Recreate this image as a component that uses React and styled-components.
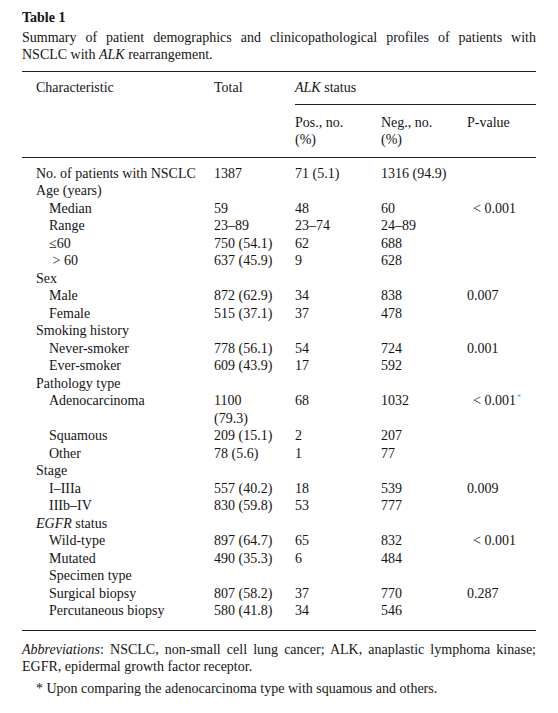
import React from "react";
import styled, { createGlobalStyle } from "styled-components";

const Global = createGlobalStyle`
  html, body { margin: 0; padding: 0; background: #ffffff; }
`;

const Page = styled.div`
  width: 514px;
  padding: 9px 22px 0 22px;
  font-family: "Liberation Serif", "Times New Roman", serif;
  font-size: 14px;
  line-height: 17.5px;
  color: #141414;
`;

const Title = styled.div`
  font-weight: bold;
`;

const Caption = styled.div`
  margin-top: 2px;
  line-height: 17px;
`;

const JustLine = styled.span`
  display: block;
  text-align: justify;
  text-align-last: ${(p) => (p.$full ? "justify" : "left")};
`;

const Table = styled.table`
  margin-top: 8.5px;
  width: 514px;
  border-collapse: collapse;
  table-layout: fixed;
  border-top: 1px solid #222;
  border-bottom: 1px solid #222;
`;

const Head = styled.th`
  font-weight: normal;
  text-align: left;
  vertical-align: top;
  padding: ${(p) => (p.$second ? "8.5px 0 8px 0" : "6.5px 0 8px 0")};
  padding-left: ${(p) => p.$indent || 0}px;
  border-bottom: ${(p) => (p.$rule ? "1px solid #222" : "none")};
`;

const Row = styled.tr`
  &:first-child td { padding-top: 7px; }
  &:last-child td { padding-bottom: 10px; }
`;

const Cell = styled.td`
  padding: 0;
  padding-left: ${(p) => p.$indent || 0}px;
  vertical-align: top;
  white-space: nowrap;
`;

const Ital = styled.i`
  font-style: italic;
`;

const Star = styled.sup`
  color: #3f9fc9;
  font-size: 8px;
  line-height: 0;
  vertical-align: 5px;
  margin-left: 1px;
`;

const Footer = styled.div`
  margin-top: 10.5px;
  line-height: 17px;
`;

const Footnote = styled.div`
  margin-top: 5px;
  padding-left: 14px;
  line-height: 17px;
`;

const rows = [
  { label: "No. of patients with NSCLC", level: 0, total: "1387", pos: "71 (5.1)", neg: "1316 (94.9)" },
  { label: "Age (years)", level: 0 },
  { label: "Median", level: 1, total: "59", pos: "48", neg: "60", p: "< 0.001", pShift: 6 },
  { label: "Range", level: 1, total: "23–89", pos: "23–74", neg: "24–89" },
  { label: "≤60", level: 1, total: "750 (54.1)", pos: "62", neg: "688" },
  { label: "\u00a0> 60", level: 1, total: "637 (45.9)", pos: "9", neg: "628" },
  { label: "Sex", level: 0 },
  { label: "Male", level: 1, total: "872 (62.9)", pos: "34", neg: "838", p: "0.007" },
  { label: "Female", level: 1, total: "515 (37.1)", pos: "37", neg: "478" },
  { label: "Smoking history", level: 0 },
  { label: "Never-smoker", level: 1, total: "778 (56.1)", pos: "54", neg: "724", p: "0.001" },
  { label: "Ever-smoker", level: 1, total: "609 (43.9)", pos: "17", neg: "592" },
  { label: "Pathology type", level: 0 },
  { label: "Adenocarcinoma", level: 1, total: ["1100", "(79.3)"], pos: "68", neg: "1032", p: "< 0.001", pShift: 6, star: true },
  { label: "Squamous", level: 1, total: "209 (15.1)", pos: "2", neg: "207" },
  { label: "Other", level: 1, total: "78 (5.6)", pos: "1", neg: "77" },
  { label: "Stage", level: 0 },
  { label: "I–IIIa", level: 1, total: "557 (40.2)", pos: "18", neg: "539", p: "0.009" },
  { label: "IIIb–IV", level: 1, total: "830 (59.8)", pos: "53", neg: "777" },
  { label: <><Ital>EGFR</Ital> status</>, level: 0 },
  { label: "Wild-type", level: 1, total: "897 (64.7)", pos: "65", neg: "832", p: "< 0.001", pShift: 6 },
  { label: "Mutated", level: 1, total: "490 (35.3)", pos: "6", neg: "484" },
  { label: "Specimen type", level: 1 },
  { label: "Surgical biopsy", level: 1, total: "807 (58.2)", pos: "37", neg: "770", p: "0.287" },
  { label: "Percutaneous biopsy", level: 1, total: "580 (41.8)", pos: "34", neg: "546" },
];

export default function App() {
  return (
    <>
      <Global />
      <Page>
        <Title>Table 1</Title>
        <Caption>
          <JustLine $full>
            Summary of patient demographics and clinicopathological profiles of patients with
          </JustLine>
          <JustLine>
            NSCLC with <Ital>ALK</Ital> rearrangement.
          </JustLine>
        </Caption>
        <Table>
          <colgroup>
            <col style={{ width: 192 }} />
            <col style={{ width: 81 }} />
            <col style={{ width: 86 }} />
            <col style={{ width: 86 }} />
            <col style={{ width: 69 }} />
          </colgroup>
          <thead>
            <tr>
              <Head rowSpan={2} $indent={14} $rule>Characteristic</Head>
              <Head rowSpan={2} $rule>Total</Head>
              <Head colSpan={3} $rule>
                <Ital>ALK</Ital> status
              </Head>
            </tr>
            <tr>
              <Head $second $rule>Pos., no.<br />(%)</Head>
              <Head $second $rule>Neg., no.<br />(%)</Head>
              <Head $second $rule>P-value</Head>
            </tr>
          </thead>
          <tbody>
            {rows.map((r, i) => (
              <Row key={i}>
                <Cell $indent={r.level ? 27 : 14}>{r.label}</Cell>
                <Cell>
                  {Array.isArray(r.total) ? (
                    <>
                      {r.total[0]}
                      <br />
                      {r.total[1]}
                    </>
                  ) : (
                    r.total
                  )}
                </Cell>
                <Cell>{r.pos}</Cell>
                <Cell>{r.neg}</Cell>
                <Cell $indent={r.pShift}>
                  {r.p}
                  {r.star && <Star>*</Star>}
                </Cell>
              </Row>
            ))}
          </tbody>
        </Table>
        <Footer>
          <JustLine $full>
            <Ital>Abbreviations</Ital>: NSCLC, non-small cell lung cancer; ALK, anaplastic lymphoma kinase;
          </JustLine>
          <JustLine>EGFR, epidermal growth factor receptor.</JustLine>
        </Footer>
        <Footnote>* Upon comparing the adenocarcinoma type with squamous and others.</Footnote>
      </Page>
    </>
  );
}
